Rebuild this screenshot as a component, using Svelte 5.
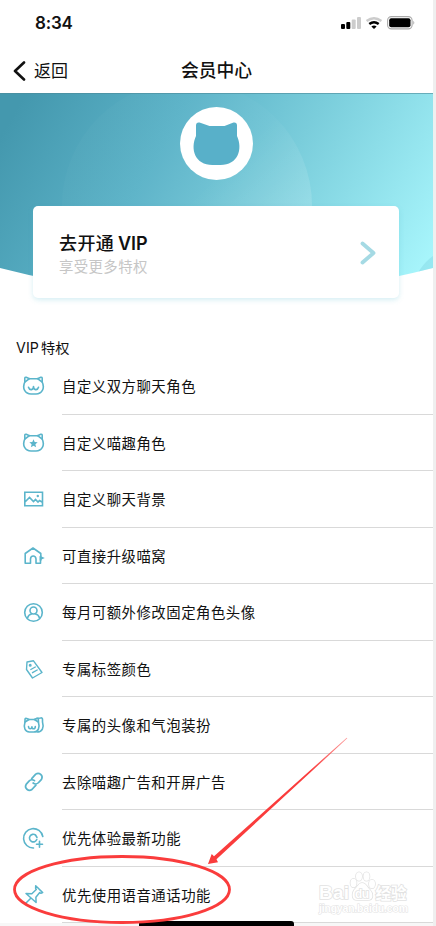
<script>
  const perks = [
    { icon: "cat", text: "自定义双方聊天角色" },
    { icon: "catStar", text: "自定义喵趣角色" },
    { icon: "picture", text: "自定义聊天背景" },
    { icon: "house", text: "可直接升级喵窝" },
    { icon: "avatar", text: "每月可额外修改固定角色头像" },
    { icon: "tag", text: "专属标签颜色" },
    { icon: "catDouble", text: "专属的头像和气泡装扮" },
    { icon: "link", text: "去除喵趣广告和开屏广告" },
    { icon: "newest", text: "优先体验最新功能" },
    { icon: "pin", text: "优先使用语音通话功能" },
  ];
</script>

<style>
  :global(body) {
    background: #efefef;
  }

  .screen {
    position: relative;
    width: 433px;
    height: 926px;
    overflow: hidden;
    background: white;
    color: #111;
    font-family: Inter, "Noto Sans CJK SC", sans-serif;
  }

  svg {
    display: block;
  }

  .status {
    display: flex;
    justify-content: space-between;
    align-items: center;
    box-sizing: border-box;
    height: 46px;
    padding: 0 17px 0 35px;
  }

  .time {
    font-size: 17px;
    font-weight: 600;
    letter-spacing: -0.2px;
  }

  .navbar {
    display: grid;
    grid-template-columns: 1fr auto 1fr;
    align-items: center;
    box-sizing: border-box;
    height: 47px;
    padding-top: 2px;
  }

  .back {
    display: flex;
    align-items: center;
    gap: 8px;
    padding-left: 13px;
    font-size: 17px;
    line-height: 24px;
  }

  h1 {
    margin: 0;
    font-size: 17.8px;
    font-weight: 500;
    line-height: 24px;
  }

  .hero {
    position: relative;
    height: 205px;
  }

  .heroBg {
    position: absolute;
    top: 0;
    left: 0;
  }

  .heroContent {
    position: relative;
    display: flex;
    flex-direction: column;
    align-items: center;
    gap: 26px;
    width: 432px;
    padding-top: 14px;
  }

  .card {
    display: flex;
    align-items: center;
    justify-content: space-between;
    box-sizing: border-box;
    width: 366px;
    height: 92px;
    padding: 4px 23px 0 26px;
    border-radius: 5px;
    background: white;
    box-shadow: 0 2px 5px rgba(90, 190, 210, 0.25);
  }

  .card svg {
    margin-top: -2px;
  }

  .cardTitle {
    font-size: 18px;
    font-weight: 500;
    line-height: 25px;
    letter-spacing: 0.4px;
    word-spacing: -1.5px;
  }

  .cardTitle span {
    font-weight: 600;
    letter-spacing: 0;
  }

  .cardSub {
    color: #c6c6c6;
    font-size: 14.4px;
    line-height: 22px;
    letter-spacing: 0.4px;
  }

  h2 {
    margin: 39px 0 0 16px;
    font-size: 14.2px;
    font-weight: 400;
    line-height: 21px;
    letter-spacing: 0.1px;
    word-spacing: -2px;
  }

  ul {
    margin: 0;
    padding: 0;
    list-style: none;
  }

  li {
    display: flex;
    align-items: center;
    height: 56.5px;
    padding-left: 22px;
  }

  li svg {
    flex: none;
    width: 24px;
    height: 24px;
    margin-right: 16px;
    fill: none;
    stroke: #5bb5cb;
    stroke-width: 1.6;
    stroke-linecap: round;
    stroke-linejoin: round;
  }

  .solid {
    fill: #5bb5cb;
    stroke: none;
  }

  .label {
    flex: 1;
    box-sizing: border-box;
    height: 56.5px;
    border-bottom: 1px solid #d9d9d9;
    font-size: 14.4px;
    line-height: 58px;
    letter-spacing: 0.5px;
  }

  .bottom {
    position: absolute;
    left: 0;
    bottom: 0;
    width: 433px;
    height: 3px;
    background: #f7f7f7;
  }

  .homeBar {
    position: absolute;
    left: 139px;
    top: 921px;
    width: 155px;
    height: 6px;
    border-radius: 3px 3px 0 0;
    background: black;
  }

  .overlay {
    position: absolute;
    top: 0;
    left: 0;
  }

  .mark {
    fill: white;
    stroke: #e2e2e2;
    stroke-width: 1.6;
    paint-order: stroke;
    font-family: "Liberation Sans", "Noto Sans CJK SC", sans-serif;
    font-weight: 700;
  }
</style>

<div class="screen">
  <div class="status">
    <div class="time">8:34</div>
    <svg width="76" height="16" viewBox="0 0 76 16">
      <rect x="1" y="9" width="4" height="5" rx="1" />
      <rect x="6.3" y="7" width="4" height="7" rx="1" />
      <rect x="11.7" y="4.5" width="4" height="9.5" rx="1" fill="#ccc" />
      <rect x="17" y="2" width="4" height="12" rx="1" fill="#ccc" />
      <g fill="none" stroke-width="2.4">
        <path d="M26.6 6q7.4-5.7 14.8 0" stroke="#ccc" />
        <path d="M29.3 9q4.7-3.7 9.4 0" stroke="black" />
      </g>
      <path d="M31.4 11.500q2.600-2 5.200 0l-2.600 2.500z" />
      <rect x="47.6" y="1.6" width="24.5" height="12.3" rx="3.8" fill="none" stroke="#aaa" stroke-width="1.1" />
      <rect x="49.2" y="3.2" width="21.3" height="9.1" rx="2" />
      <path d="M73.3 5.8q2 2 0 4z" fill="#aaa" />
    </svg>
  </div>

  <div class="navbar">
    <div class="back">
      <svg width="13" height="20" viewBox="0 0 13 20">
        <path d="M11 1.5L2 10l9 8.500" fill="none" stroke="#111" stroke-width="2.6" stroke-linecap="round" stroke-linejoin="round" />
      </svg>
      返回
    </div>
    <h1>会员中心</h1>
    <div></div>
  </div>

  <div class="hero">
    <svg class="heroBg" width="433" height="205" viewBox="0 0 433 205">
      <defs>
        <linearGradient id="sea" gradientUnits="userSpaceOnUse" x1="20" y1="10" x2="398" y2="228">
          <stop offset="0" stop-color="#4498ae" />
          <stop offset="0.33" stop-color="#5cb3c8" />
          <stop offset="0.6" stop-color="#7acddb" />
          <stop offset="1" stop-color="#a8f6fc" />
        </linearGradient>
        <linearGradient id="bubble" gradientUnits="userSpaceOnUse" x1="190" y1="20" x2="300" y2="130">
          <stop offset="0" stop-color="white" stop-opacity="0.02" />
          <stop offset="0.4" stop-color="white" stop-opacity="0.02" />
          <stop offset="1" stop-color="white" stop-opacity="0.15" />
        </linearGradient>
        <clipPath id="bowl">
          <path d="M0 0H433V175Q216.5 231 0 175z" />
        </clipPath>
      </defs>
      <g clip-path="url(#bowl)">
        <rect width="433" height="205" fill="url(#sea)" />
        <circle cx="187" cy="113" r="125" fill="url(#bubble)" />
        <circle cx="464" cy="206" r="53" fill="#6fc7d8" opacity="0.3" />
        <rect width="433" height="1" fill="#4c8b99" opacity="0.6" />
      </g>
    </svg>
    <div class="heroContent">
      <svg width="73" height="73" viewBox="0 0 73 73">
        <circle cx="36.5" cy="36.5" r="36.5" fill="white" />
        <path d="M16 29V18.500Q16 15 19.500 15.500L29.500 19H44.500L53.500 15.500Q57 15 57 18.500V29C63 42 58 58 40.500 58H32.500C15 58 10 42 16 29z" fill="#58b0c9" />
      </svg>
      <div class="card">
        <div>
          <div class="cardTitle">去开通 <span>VIP</span></div>
          <div class="cardSub">享受更多特权</div>
        </div>
        <svg width="16" height="24" viewBox="0 0 16 24">
          <path d="M2.5 2.500L13.500 12l-11 9.500" fill="none" stroke="#a5dae4" stroke-width="3.8" stroke-linecap="round" stroke-linejoin="round" />
        </svg>
      </div>
    </div>
  </div>

  <h2>VIP 特权</h2>
  <ul>
    {#each perks as perk}
      <li>
        <svg viewBox="0 0 24 24">
          {#if perk.icon === "cat" || perk.icon === "catStar"}
            <path d="M2.800 8V4.500Q2.800 3 4.200 3.300L7.500 4.700h8l3.300-1.400q1.400-.3 1.400 1.200V8c3 6.500-.5 12-6.200 12h-5C3.300 20-.2 14.500 2.800 8z" />
            <path d="M2.800 8L7.500 4.700M20.200 8L15.500 4.700" />
            {#if perk.icon === "cat"}
              <path d="M6.500 13.300q.8 2.700 3 2.300 2-.3 2-3 0 2.700 2 3 2.200.4 3-2.300" />
            {:else}
              <path class="solid" d="M11.500 8.300l1.200 2.700 3 .3-2.300 2 .7 3-2.600-1.600-2.600 1.600.7-3-2.300-2 3-.3z" />
            {/if}
          {:else if perk.icon === "picture"}
            <path d="M2.800 5.200h17.700v13.600H2.800zM3.500 14.500l4-4 4 4 2-2 2.500 2.500 1.500-1.500 2.500 1.500" stroke-linejoin="miter" />
            <circle class="solid" cx="15.8" cy="9" r="1.2" />
          {:else if perk.icon === "house"}
            <path d="M8.500 19.200H3.200V9.500L11 4l7.800 5.500v2M8.500 19.200V15q.2-3 2.700-3T14 15v4.200h4.500v-3" />
            <path class="solid" d="M17.500 12.200l1.500-1.200 1 1.700 2.800 1.300-2.800 1.300-1 2-1.500-1z" />
          {:else if perk.icon === "avatar"}
            <circle cx="11.5" cy="12.5" r="8.8" />
            <circle cx="11.5" cy="10.5" r="3.5" />
            <path d="M5.500 18q1-3.500 4-4M17.500 18q-1-3.500-4-4" />
          {:else if perk.icon === "tag"}
            <path d="M5 5l6.500-1.200L20 15.500l-9.500 5.500L4.500 12.500zM8.800 12.500l4.500-2.500M10.500 15.700l4.700-2.700" stroke-width="1.400" />
            <circle cx="8.2" cy="8.2" r=".7" />
          {:else if perk.icon === "catDouble"}
            <path d="M3 9V6.500Q3 5 4.700 5.500l2.500 1h5l2.500-1q1.700-.5 1.700 1V9c1.700 5.500-.2 10-4.500 10H7.300C3 19 1.300 14.500 3 9z" />
            <path d="M14.500 5.500l4-.5q2-.5 2 1.500V9c1.700 5.500-.2 10-5.500 10M6.500 13.500q.2 2.300 1.700 2.300t1.700-2q0 2 1.700 2t1.700-2.300M3 9l4-2.500M16.400 9l-4-2.500" />
          {:else if perk.icon === "link"}
            <g transform="rotate(-48 12 12)" stroke-width="1.7">
              <path d="M11 15.500H5a4 4 0 0 1 0-7.800h4.300A4 4 0 0 1 13.300 11.500" />
              <path d="M13 8h6a4 4 0 0 1 0 7.800h-4.300A4 4 0 0 1 10.700 12" />
            </g>
          {:else if perk.icon === "newest"}
            <path d="M20.800 10.500A9.700 9.700 0 1 0 11.500 22" />
            <path d="M13.500 9A3.800 3.800 0 1 0 14.800 13.500M13.500 9l1.500 2.500" />
            <path d="M17.500 15.300v6M14.500 18.300h6" />
          {:else}
            <path d="M13.700 2.800l7 6.800-1.800.7-1.200-.8-3.800 4.800.2 5.200L4 10.500l5.800.2 4.500-4.200-.7-1.200zM8.500 15.500l-5.500 5.500" stroke-width="1.5" />
          {/if}
        </svg>
        <div class="label">{perk.text}</div>
      </li>
    {/each}
  </ul>

  <div class="bottom"></div>
  <div class="homeBar"></div>

  <svg class="overlay" width="433" height="926" viewBox="0 0 433 926">
    <g class="mark">
      <text x="319" y="899" font-size="19" textLength="30">Bai</text>
      <ellipse cx="353.5" cy="883" rx="3" ry="4.2" />
      <ellipse cx="359" cy="876.5" rx="3" ry="4.2" />
      <ellipse cx="366.5" cy="876.5" rx="3" ry="4.2" />
      <ellipse cx="372" cy="884" rx="3" ry="4.2" />
      <path d="M362 883c-3 0-4 3-7 6s-4 11 2 11h11c6 0 5-7 2-10s-4-7-8-7z" />
      <text x="355" y="897.5" font-size="12" textLength="14">du</text>
      <text x="375.5" y="898.5" font-size="15.5" textLength="31">经验</text>
      <text x="319" y="912" font-size="10.5" stroke-width="1" textLength="89">jingyan.baidu.com</text>
    </g>
    <defs>
      <linearGradient id="tail" gradientUnits="userSpaceOnUse" x1="347" y1="738" x2="310" y2="771">
        <stop offset="0" stop-color="#fa3c3c" stop-opacity="0.5" />
        <stop offset="1" stop-color="#fa3c3c" />
      </linearGradient>
    </defs>
    <path d="M347.300 738.300L216.500 859.300l1.500 3L208 864l3.700-10 2.300 2.300L346.700 737.700z" fill="url(#tail)" />
    <ellipse cx="122" cy="889.5" rx="107.500" ry="33" fill="none" stroke="#fa3c3c" stroke-width="2.8" />
  </svg>
</div>
